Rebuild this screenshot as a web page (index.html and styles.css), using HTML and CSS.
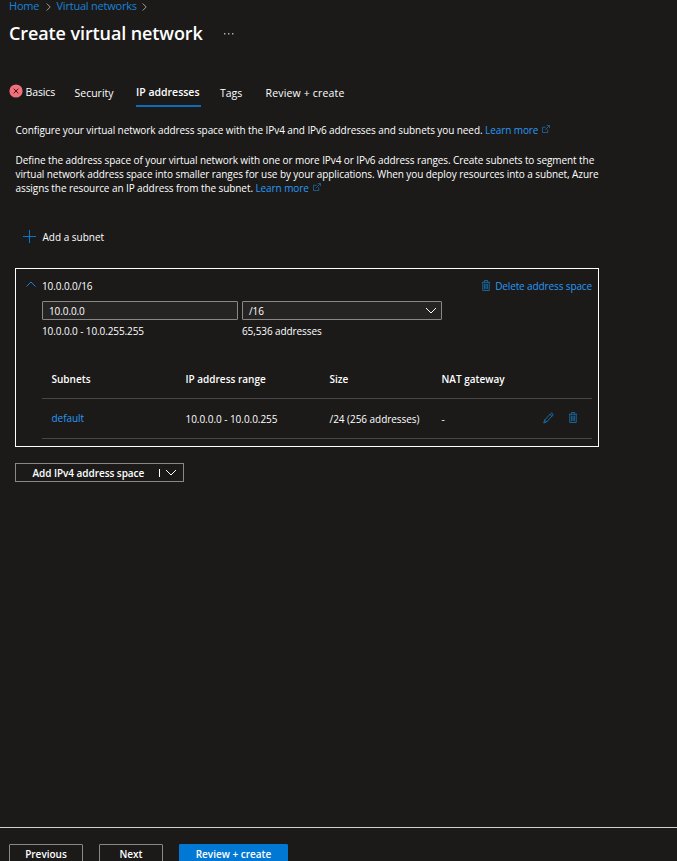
FILE: index.html
```html
<!DOCTYPE html>
<html lang="en">
<head>
<meta charset="utf-8">
<title>Create virtual network</title>
<link rel="stylesheet" href="styles.css">
</head>
<body>
<svg class="defs" width="0" height="0" aria-hidden="true">
  <symbol id="trash" viewBox="0 0 10 12"><path d="M.5 2.5h9M3.2 2.3V.6h3.6v1.7M1.5 2.7v8.8h7V2.7M3.5 4v6M5 4v6M6.5 4v6"/></symbol>
  <symbol id="external" viewBox="0 0 9 9"><path d="M4 2.5H.5v6h6V5M3.5 5.5 8 1M5.5.5h3v3"/></symbol>
  <symbol id="chevron" viewBox="0 0 12 7"><path d="M1 1l5 5 5-5"/></symbol>
  <symbol id="crumb" viewBox="0 0 5 8"><path d="M.7.5 4.2 4 .7 7.5"/></symbol>
</svg>
<header class="header">
  <nav class="crumbs">
    <a class="home">Home</a><svg class="crumb-icon"><use href="#crumb"/></svg>
    <a class="networks">Virtual networks</a><svg class="crumb-icon"><use href="#crumb"/></svg>
  </nav>
  <div class="title-row"><h1>Create virtual network</h1><svg class="more" viewBox="0 0 10 2"><path d="M0 0h1.4v1.4H0zM4 0h1.4v1.4H4zM8 0h1.4v1.4H8z"/></svg></div>
</header>
<nav class="tabs">
  <a class="tab basics"><svg class="error" viewBox="0 0 14 14"><circle cx="7" cy="7" r="6.6"/><path d="M4.7 4.7l4.6 4.6M9.3 4.7 4.7 9.3"/></svg><span>Basics</span></a>
  <a class="tab security"><span>Security</span></a>
  <a class="tab active"><span>IP addresses</span></a>
  <a class="tab tags"><span>Tags</span></a>
  <a class="tab review"><span>Review + create</span></a>
</nav>
<main class="content">
  <p class="intro">Configure your virtual network address space with the IPv4 and IPv6 addresses and subnets you need. <a>Learn more</a><svg class="external"><use href="#external"/></svg></p>
  <p class="details">Define the address space of your virtual network with one or more IPv4 or IPv6 address ranges. Create subnets to segment the<br>virtual network address space into smaller ranges for use by your applications. When you deploy resources into a subnet, Azure<br>assigns the resource an IP address from the subnet. <a>Learn more</a><svg class="external"><use href="#external"/></svg></p>
  <div class="add-subnet"><svg class="plus" viewBox="0 0 13 13"><path d="M6.5 0v13M0 6.5h13"/></svg><span>Add a subnet</span></div>
  <section class="space">
    <div class="space-head">
      <svg class="collapse" viewBox="0 0 10 6"><path d="M.5 5.5 5 1l4.5 4.5"/></svg>
      <span class="cidr">10.0.0.0/16</span>
      <a class="delete"><svg class="trash"><use href="#trash"/></svg><span>Delete address space</span></a>
    </div>
    <div class="fields">
      <div class="field address"><div class="box"><span>10.0.0.0</span></div><span class="hint">10.0.0.0 - 10.0.255.255</span></div>
      <div class="field size"><div class="box"><span>/16</span><svg class="chevron"><use href="#chevron"/></svg></div><span class="hint">65,536 addresses</span></div>
    </div>
    <div class="table">
      <div class="row head"><span>Subnets</span><span>IP address range</span><span>Size</span><span>NAT gateway</span></div>
      <div class="row"><a class="subnet">default</a><span>10.0.0.0 - 10.0.0.255</span><span>/24 (256 addresses)</span><span>-</span>
        <div class="actions"><svg class="pencil" viewBox="0 0 11 12"><path d="M.8 11 1.6 8 8 1.3c.8-.8 2.7.8 1.9 1.8L3.5 10zM7 2.4l1.9 1.9M1.6 8l1.9 2"/></svg><svg class="trash"><use href="#trash"/></svg></div></div>
    </div>
  </section>
  <div class="split"><span>Add IPv4 address space</span><i></i><svg class="chevron"><use href="#chevron"/></svg></div>
</main>
<footer class="footer">
  <div class="button previous">Previous</div><div class="button next">Next</div><div class="button primary">Review + create</div>
</footer>
</body>
</html>
```
FILE: styles.css
```css
* { box-sizing: border-box; }
body { margin: 0; height: 861px; overflow: hidden; display: flex; flex-direction: column; background: #1b1a19; color: #fff; font: 10px/14px "Open Sans", "Noto Sans", sans-serif; white-space: nowrap; }
svg { display: block; flex: none; fill: none; stroke: currentColor; overflow: visible; }
.defs { position: absolute; }
a { color: #2899f5; }
h1, p { margin: 0; }

.header { flex: none; height: 76px; padding-left: 9px; }
.crumbs { display: flex; height: 13px; font-size: 11px; line-height: 12px; letter-spacing: -.21px; }
.crumbs a { color: #1683d8; }
.home { width: 37px; }
.networks { width: 85.5px; margin-left: 5.5px; }
.crumb-icon { width: 5px; height: 8px; margin-top: 3px; color: #a19f9d; }
.title-row { display: flex; align-items: center; height: 41px; }
h1 { width: 215px; padding-bottom: 2px; font-size: 18px; line-height: 24px; font-weight: 600; letter-spacing: -.1px; }
.more { width: 10px; height: 2px; fill: #b3b0ad; stroke: none; }

.tabs { flex: none; display: flex; height: 31px; padding-left: 9px; font-size: 10.5px; }
.tab { display: flex; align-items: center; height: 31px; color: #fff; padding-top: 2px; }
.basics { width: 65px; gap: 3px; padding-top: 0; }
.basics span { letter-spacing: -.1px; }
.error { width: 14px; height: 14px; margin: -1px 0 0 -.5px; }
.error circle { fill: #f1707b; stroke: none; }
.error path { stroke: #3b1518; }
.security { width: 62px; padding-left: .5px; }
.active { width: 65px; padding-top: 2px; border-bottom: 2px solid #0f6cbd; font-weight: 600; }
.tags { width: 64px; padding-left: 19px; }
.review { width: 80px; padding-left: .5px; letter-spacing: .17px; }

.content { flex: none; padding-left: 15px; font-weight: 500; }
p { padding-left: .5px; letter-spacing: -.083px; }
.intro { height: 14px; margin-top: 16px; }
.details { margin-top: 16px; }
.external { display: inline-block; width: 8px; height: 8px; margin-left: 4px; vertical-align: 1px; color: #1f6fa8; stroke-width: .9; }
.add-subnet { display: flex; height: 14px; margin: 35px 0 24px 8px; gap: 6.5px; }
.plus { width: 13px; height: 13px; color: #0078d4; }

.space { width: 584px; height: 179px; border: 1px solid #fff; padding: 9px 6px 0 10px; }
.space-head { display: flex; align-items: center; height: 16px; }
.cidr { letter-spacing: -.1px; }
.collapse { width: 10px; height: 6px; margin: -5px 6px 0 0; color: #1683d8; }
.delete { display: flex; align-items: center; gap: 4px; margin: -1px 0 0 auto; letter-spacing: -.12px; }
.trash { width: 10px; height: 12px; color: #1b75b8; stroke-width: .9; }
.delete .trash { height: 11px; }
.fields { display: flex; gap: 4px; margin: 7px 0 0 16px; letter-spacing: -.1px; }
.address { width: 196px; }
.size { width: 200px; }
.box { display: flex; align-items: center; justify-content: space-between; height: 19px; padding: 0 4px 0 6px; border: 1px solid #8a8886; border-radius: 1px; background: #252423; }
.address .box { padding-top: 1px; }
.hint { display: block; margin-top: 4px; }
.chevron { width: 12px; height: 7px; }
.table { margin: 21px 0 0 16px; }
.row { display: grid; grid-template-columns: 134px 144px 112px 101px 1fr; align-items: center; height: 40px; padding-left: 9.5px; border-bottom: 1px solid #484644; letter-spacing: -.04px; }
.head { font-weight: 600; letter-spacing: 0; }
.subnet { padding-bottom: 2px; }
.actions { display: flex; gap: 14px; padding: 0 0 1px .5px; }
.pencil { width: 11px; height: 12px; color: #1b75b8; stroke-width: .9; }
.actions .trash { height: 11px; }

.split { display: flex; align-items: center; width: 169px; height: 19px; margin-top: 16px; padding-left: 16px; border: 1px solid #8a8886; font-weight: 600; letter-spacing: -.05px; }
.split span { width: 127px; padding-left: .5px; }
.split i { width: 1px; height: 8px; margin-right: 5px; background: #fff; }
.split .chevron { margin-top: -1px; }

.footer { flex: none; display: flex; gap: 16px; height: 34px; margin-top: auto; padding: 16px 0 0 9px; border-top: 1px solid #d2d0ce; font-weight: 600; }
.button { height: 24px; border: 1px solid #8a8886; border-radius: 1px; line-height: 18px; text-align: center; }
.previous { width: 74px; }
.next { width: 64px; }
.primary { width: 109px; border-color: #0078d4; background: #0078d4; }
```
